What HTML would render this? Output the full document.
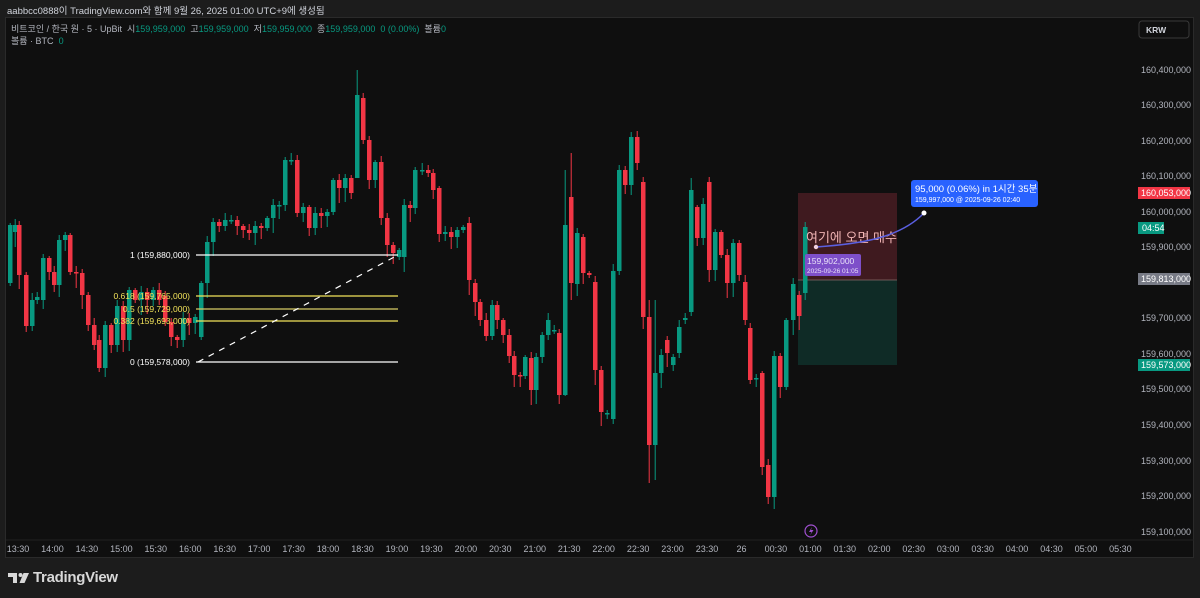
<!DOCTYPE html>
<html><head><meta charset="utf-8">
<style>
body{margin:0;width:1200px;height:598px;background:#1c1c1c;overflow:hidden;font-family:"Liberation Sans","Noto Sans CJK KR",sans-serif;position:relative}
.top{position:absolute;left:7px;top:3px;font-size:9.5px;color:#d1d4dc}
.panel{position:absolute;left:5px;top:17px;width:1189px;height:541px;background:#0f0f0f;border:1px solid #2a2a2a;box-sizing:border-box}
.leg{position:absolute;left:11px;font-size:9px;color:#b2b5be}
.leg b{font-weight:normal;color:#089981}
svg{position:absolute;left:0;top:0}
.logo{position:absolute;left:33px;top:569px;font-size:15px;font-weight:bold;color:#d8d8d8;letter-spacing:-0.3px}
</style></head><body>
<div class="top">aabbcc0888이 TradingView.com와 함께 9월 26, 2025 01:00 UTC+9에 생성됨</div>
<div class="panel"></div>
<div class="leg" style="top:22px">비트코인 / 한국 원 · 5 · UpBit &nbsp;시<b>159,959,000</b> &nbsp;고<b>159,959,000</b> &nbsp;저<b>159,959,000</b> &nbsp;종<b>159,959,000 &nbsp;0 (0.00%)</b> &nbsp;볼륨<b>0</b></div>
<div class="leg" style="top:34px">볼륨 · BTC &nbsp;<b>0</b></div>
<svg id="s" width="1200" height="598" xmlns="http://www.w3.org/2000/svg" font-family="Liberation Sans, Noto Sans CJK KR, sans-serif">
<rect x="1139" y="21" width="50" height="17" rx="3" fill="#0f0f0f" stroke="#3a3a3a"/>
<text x="1146" y="33" font-size="8.5" fill="#d1d4dc" font-weight="bold">KRW</text>
<line x1="6" y1="540" x2="1194" y2="540" stroke="#222" />
<rect x="798" y="193" width="99" height="87" fill="#3f1a1f"/>
<rect x="798" y="280" width="99" height="85" fill="#0f2b26"/>
<line x1="798" y1="280" x2="897" y2="280" stroke="#8a6a6a" stroke-width="0.8"/>
<g id="c"></g>
<line x1="196" y1="255" x2="398" y2="255" stroke="#fff" stroke-width="1.2"/>
<line x1="196" y1="296" x2="398" y2="296" stroke="#f2e35a" stroke-width="1.2"/>
<line x1="196" y1="309" x2="398" y2="309" stroke="#d8cc66" stroke-width="1.2"/>
<line x1="196" y1="321" x2="398" y2="321" stroke="#f2e35a" stroke-width="1.2"/>
<line x1="196" y1="362" x2="398" y2="362" stroke="#fff" stroke-width="1.2"/>
<line x1="198" y1="362" x2="398" y2="255" stroke="#fff" stroke-width="1.2" stroke-dasharray="6,6"/>
<g font-size="8.5" text-anchor="end">
<text x="190" y="258" fill="#fff">1 (159,880,000)</text>
<text x="190" y="299" fill="#f2e35a">0.618 (159,765,000)</text>
<text x="190" y="312" fill="#f2e35a">0.5 (159,729,000)</text>
<text x="190" y="324" fill="#f2e35a">0.382 (159,693,000)</text>
<text x="190" y="365" fill="#fff">0 (159,578,000)</text>
</g>
<text x="806" y="242" font-size="13" fill="#f0b4b4">여기에 오면 매수</text>
<path d="M816 247 C860 244 900 238 924 213" stroke="#5a5fe0" stroke-width="1.5" fill="none"/>
<circle cx="816" cy="247" r="2.2" fill="#f0d0e0"/>
<circle cx="924" cy="213" r="2.5" fill="#fff"/>
<rect x="805" y="254" width="56" height="22" rx="2" fill="#7e4fc9"/>
<text x="807" y="264" font-size="8.5" fill="#e8e0f8">159,902,000</text>
<text x="807" y="273" font-size="6.5" fill="#e8e0f8">2025-09-26 01:05</text>
<rect x="911" y="180" width="127" height="27" rx="3" fill="#2962ff"/>
<text x="915" y="192" font-size="9.5" fill="#fff">95,000 (0.06%) in 1시간 35분</text>
<text x="915" y="202" font-size="7" fill="#fff">159,997,000 @ 2025-09-26  02:40</text>
<circle cx="811" cy="531" r="6" fill="none" stroke="#a050d0" stroke-width="1.2"/>
<path d="M812 527 L809 532 L811.5 532 L810 535.5 L813.5 530 L811 530 Z" fill="#a050d0"/>
<g fill="#d8d8d8">
<path d="M8 573 H17 V583 H13 V577 H8 Z"/>
<circle cx="20.5" cy="575" r="2"/>
<path d="M23.5 573 H29 L24.5 583 H19.5 Z"/>
</g>
<g id="ax" font-size="9" fill="#b2b5be"></g>
<g id="tx" font-size="9" fill="#b2b5be" text-anchor="middle"></g>
</svg>
<div class="logo">TradingView</div>
<script>
var NS="http://www.w3.org/2000/svg";
function el(p,t,a,txt){var e=document.createElementNS(NS,t);for(var k in a)e.setAttribute(k,a[k]);if(txt)e.textContent=txt;p.appendChild(e);return e;}
var C=[[8,283,225],[13,232,225],[17,225,275],[24,275,326],[30,326,300],[35,300,297],[41,300,258],[47,258,272],[52,272,285],[57,285,240],[63,240,235],[68,235,272],[74,272,273],[80,273,295],[86,295,325],[92,325,345],[97,340,368],[103,368,325],[109,325,345],[115,345,306],[121,306,340],[127,340,290],[133,290,300],[139,300,292],[145,292,300],[151,300,290],[157,290,300],[163,296,322],[169,322,337],[175,337,340],[181,340,318],[187,318,323],[193,323,317],[199,337,283],[205,283,242],[211,242,222],[217,222,226],[223,226,220],[229,220,220],[235,220,226],[241,226,230],[247,230,233],[253,233,226],[259,226,228],[265,228,218],[271,218,205],[277,205,205],[283,205,160],[289,160,160],[295,160,213],[301,213,207],[307,207,228],[313,228,213],[319,213,216],[325,216,212],[331,212,180],[337,180,188],[343,188,178],[349,178,193],[355,178,95,70,178],[361,98,140],[367,140,180],[373,180,162],[379,162,218],[385,218,245],[391,245,253],[397,257,250],[402,257,205],[408,205,208],[413,208,170],[420,170,170],[426,170,173],[431,173,190],[437,188,234],[443,234,232],[449,232,237],[455,237,230],[461,230,227],[467,223,280],[473,283,302],[478,302,320],[484,320,336],[490,336,305],[495,305,320],[501,320,335],[507,335,356],[512,356,375],[518,375,376],[523,376,357],[529,358,390],[534,390,357],[540,357,335],[546,335,320],[552,330,330],[557,333,395],[563,395,225,170,396],[569,197,283,153,300],[575,284,233],[581,237,273],[587,273,275],[593,282,370],[599,370,412],[605,413,413],[611,419,271],[617,271,170],[623,170,185],[629,185,137,132,195],[635,137,163],[641,182,317],[647,317,445,300,483],[653,445,373,300,480],[659,373,355],[665,340,353],[671,365,357],[677,353,327],[683,320,318],[689,312,190,178,316],[695,207,238],[701,238,204],[707,182,270],[713,270,232],[719,232,255],[725,255,283],[731,283,243],[737,243,275],[743,282,320],[748,328,380],[754,378,378],[760,373,467],[766,465,497],[772,497,356],[778,356,387],[784,387,320],[791,320,284],[797,295,316],[803,293,227,222,300]];
var g=document.getElementById('c');
C.forEach(function(c,i){var x=c[0],o=c[1],cl=c[2];var up=cl<=o;var col=up?'#089981':'#f23645';var t=Math.min(o,cl),b=Math.max(o,cl);var r=((i*37)%11);var hi=c[3]!==undefined?c[3]:t-2-r%6;var lo=c[4]!==undefined?c[4]:b+3+(r*3)%13;
el(g,'line',{x1:x+2.2,x2:x+2.2,y1:hi,y2:lo,stroke:col,'stroke-width':1});
el(g,'rect',{x:x,y:t,width:4.5,height:Math.max(1.5,b-t),fill:col});});
var ax=document.getElementById('ax');
[[70,'160,400,000'],[105,'160,300,000'],[141,'160,200,000'],[176,'160,100,000'],[212,'160,000,000'],[247,'159,900,000'],[318,'159,700,000'],[354,'159,600,000'],[389,'159,500,000'],[425,'159,400,000'],[461,'159,300,000'],[496,'159,200,000'],[532,'159,100,000']].forEach(function(a){el(ax,'text',{x:1141,y:a[0]+3},a[1]);});
[[193,'160,053,000','#f23645'],[279,'159,813,000','#787b86'],[365,'159,573,000','#089981']].forEach(function(a){el(ax,'rect',{x:1138,y:a[0]-6,width:52,height:12,fill:a[2]});el(ax,'text',{x:1141,y:a[0]+3,fill:'#fff'},a[1]);});
el(ax,'rect',{x:1138,y:222,width:26,height:12,fill:'#089981'});el(ax,'text',{x:1142,y:231,fill:'#fff'},'04:54');
var T=['13:30','14:00','14:30','15:00','15:30','16:00','16:30','17:00','17:30','18:00','18:30','19:00','19:30','20:00','20:30','21:00','21:30','22:00','22:30','23:00','23:30','26','00:30','01:00','01:30','02:00','02:30','03:00','03:30','04:00','04:30','05:00','05:30'];
var tx=document.getElementById('tx');T.forEach(function(t,i){el(tx,'text',{x:18+i*34.45,y:552},t);});
</script>
</body></html>
